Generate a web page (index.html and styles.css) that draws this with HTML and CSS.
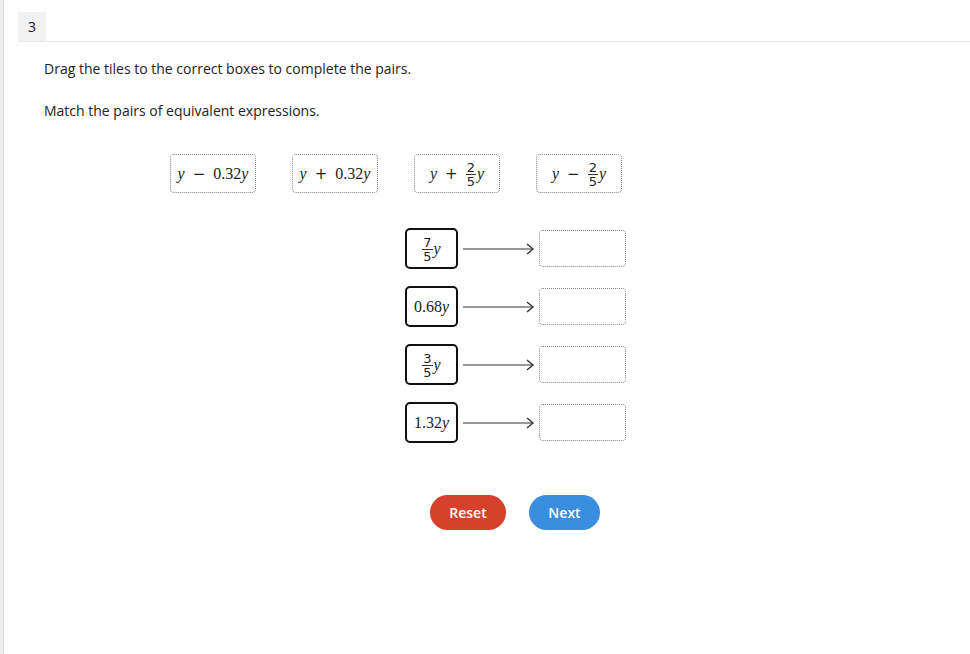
FILE: index.html
```html
<!DOCTYPE html>
<html>
<head>
<meta charset="utf-8">
<link rel="stylesheet" href="styles.css">
</head>
<body>
<div class="page">
  <div class="strip"></div>
  <div class="main">
    <div class="header">
      <div class="qnum">3</div>
    </div>
    <div class="content">
      <p class="instr first">Drag the tiles to the correct boxes to complete the pairs.</p>
      <p class="instr">Match the pairs of equivalent expressions.</p>

      <div class="tiles">
        <div class="tile"><span class="m"><i>y</i><span class="op">−</span>0.32<i>y</i></span></div>
        <div class="tile"><span class="m"><i>y</i><span class="op">+</span>0.32<i>y</i></span></div>
        <div class="tile"><span class="m"><i>y</i><span class="op">+</span><span class="frac"><span class="num">2</span><span class="den">5</span></span><i>y</i></span></div>
        <div class="tile"><span class="m"><i>y</i><span class="op">−</span><span class="frac"><span class="num">2</span><span class="den">5</span></span><i>y</i></span></div>
      </div>

      <div class="pairs">
        <div class="pair">
          <div class="src"><span class="m"><span class="frac"><span class="num">7</span><span class="den">5</span></span><i>y</i></span></div>
          <div class="arrow"><svg width="72" height="12" viewBox="0 0 72 12"><line x1="0" y1="6" x2="70" y2="6" stroke="#333" stroke-width="1.2"/><polyline points="64,1 70,6 64,11" fill="none" stroke="#333" stroke-width="1.4"/></svg></div>
          <div class="target"></div>
        </div>
        <div class="pair">
          <div class="src"><span class="m">0.68<i>y</i></span></div>
          <div class="arrow"><svg width="72" height="12" viewBox="0 0 72 12"><line x1="0" y1="6" x2="70" y2="6" stroke="#333" stroke-width="1.2"/><polyline points="64,1 70,6 64,11" fill="none" stroke="#333" stroke-width="1.4"/></svg></div>
          <div class="target"></div>
        </div>
        <div class="pair">
          <div class="src"><span class="m"><span class="frac"><span class="num">3</span><span class="den">5</span></span><i>y</i></span></div>
          <div class="arrow"><svg width="72" height="12" viewBox="0 0 72 12"><line x1="0" y1="6" x2="70" y2="6" stroke="#333" stroke-width="1.2"/><polyline points="64,1 70,6 64,11" fill="none" stroke="#333" stroke-width="1.4"/></svg></div>
          <div class="target"></div>
        </div>
        <div class="pair">
          <div class="src"><span class="m">1.32<i>y</i></span></div>
          <div class="arrow"><svg width="72" height="12" viewBox="0 0 72 12"><line x1="0" y1="6" x2="70" y2="6" stroke="#333" stroke-width="1.2"/><polyline points="64,1 70,6 64,11" fill="none" stroke="#333" stroke-width="1.4"/></svg></div>
          <div class="target"></div>
        </div>
      </div>

      <div class="buttons">
        <button class="btn reset">Reset</button>
        <button class="btn next">Next</button>
      </div>
    </div>
  </div>
</div>
</body>
</html>
```
FILE: styles.css
```css
html, body {
  margin: 0;
  padding: 0;
  background: #fff;
}
body {
  font-family: "Open Sans", "Liberation Sans", sans-serif;
  color: #222;
  width: 970px;
  height: 654px;
  overflow: hidden;
}
.page {
  display: flex;
  height: 654px;
}
.strip {
  width: 3px;
  background: #efefef;
  border-right: 1px solid #e2e2e2;
  flex: none;
}
.main {
  flex: 1;
  display: flex;
  flex-direction: column;
}
.header {
  margin-left: 14px;
  margin-top: 12px;
  border-bottom: 1px solid #e8e8e8;
  display: flex;
}
.qnum {
  width: 28px;
  height: 29px;
  background: #f1f1f1;
  font-size: 14px;
  line-height: 29px;
  text-align: center;
  color: #222;
}
.content {
  padding-left: 40px;
}
.instr {
  margin: 0;
  font-size: 14px;
  line-height: 20px;
  color: #222;
}
.instr.first {
  margin-top: 17px;
}
.instr + .instr {
  margin-top: 22px;
}
.m {
  font-family: "Liberation Serif", "DejaVu Serif", serif;
  font-size: 16px;
  color: #222;
  display: inline-flex;
  align-items: center;
  white-space: nowrap;
}
.m i {
  font-style: italic;
}
.op {
  margin: 0 8px;
  font-family: "DejaVu Sans", sans-serif;
  font-size: 15px;
}
.frac {
  display: inline-flex;
  flex-direction: column;
  align-items: center;
  font-family: "DejaVu Sans", sans-serif;
  font-size: 13px;
  line-height: 13px;
  margin-right: 1px;
  padding-top: 2px;
}
.frac .num {
  border-bottom: 1px solid #333;
  padding: 0 1px;
}
.tiles {
  display: flex;
  gap: 36px;
  margin-left: 126px;
  margin-top: 33px;
}
.tile {
  width: 84px;
  height: 37px;
  border: 1px dotted #888;
  border-radius: 4px;
  display: flex;
  align-items: center;
  justify-content: center;
}
.pairs {
  margin-left: 361px;
  margin-top: 35px;
  display: flex;
  flex-direction: column;
  gap: 17px;
}
.pair {
  display: flex;
  align-items: center;
}
.src {
  width: 49px;
  height: 37px;
  border: 2px solid #111;
  border-radius: 5px;
  display: flex;
  align-items: center;
  justify-content: center;
}
.arrow {
  margin-left: 5px;
  display: flex;
  align-items: center;
}
.target {
  margin-left: 4px;
  width: 85px;
  height: 35px;
  border: 1px dotted #888;
  border-radius: 4px;
}
.buttons {
  display: flex;
  gap: 23px;
  margin-left: 386px;
  margin-top: 52px;
}
.btn {
  border: none;
  height: 35px;
  border-radius: 18px;
  color: #fff;
  font-family: "Open Sans", "Liberation Sans", sans-serif;
  font-weight: 600;
  font-size: 14px;
  padding: 0;
  cursor: pointer;
}
.reset {
  width: 76px;
  background: #d7402c;
}
.next {
  width: 71px;
  background: #3a8ee0;
}
```
